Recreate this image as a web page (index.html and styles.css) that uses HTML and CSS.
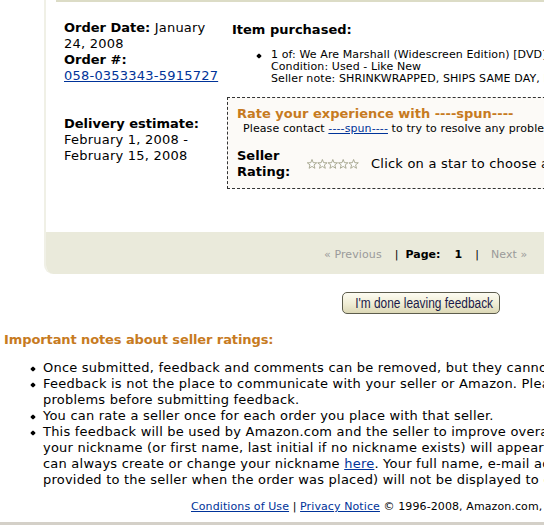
FILE: index.html
```html
<!DOCTYPE html>
<html lang="en">

<head>
    <meta charset="UTF-8">
    <meta name="viewport" content="width=device-width, initial-scale=1.0">
    <title>Leave Seller Feedback</title>
    <link rel="stylesheet" href="styles.css">
</head>

<body>
    <div class="page">

        <div class="panel">
            <div class="order">
                <div class="order-info">
                    <p><b>Order Date:</b> January 24, 2008</p>
                    <p><b>Order #:</b> <a class="order-link" href="#">058-0353343-5915727</a></p>
                    <p class="delivery"><b>Delivery estimate:</b> February 1, 2008 - February 15, 2008</p>
                </div>

                <div class="item-col">
                    <h3 class="item-title">Item purchased:</h3>
                    <ul class="items">
                        <li>1 of: We Are Marshall (Widescreen Edition) [DVD]<br>
                            Condition: Used - Like New<br>
                            Seller note: SHRINKWRAPPED, SHIPS SAME DAY, FAST DELIVERY!</li>
                    </ul>

                    <div class="rate-box">
                        <h3 class="rate-title">Rate your experience with ----spun----</h3>
                        <p class="contact">Please contact <a href="#">----spun----</a> to try to resolve any problems before leaving feedback.</p>
                        <div class="rating-row">
                            <div class="rating-label">Seller<br>Rating:</div>
                            <svg class="stars" viewBox="0 0 52 11">
                                <defs>
                                    <polygon id="star" points="5,0.5 6.2,3.7 9.7,3.8 7,5.9 7.9,9.3 5,7.4 2.1,9.3 3,5.9 0.3,3.8 3.8,3.7" />
                                </defs>
                                <use href="#star" x="0" />
                                <use href="#star" x="10.4" />
                                <use href="#star" x="20.8" />
                                <use href="#star" x="31.2" />
                                <use href="#star" x="41.6" />
                            </svg>
                            <span class="rating-hint">Click on a star to choose a rating</span>
                        </div>
                    </div>
                </div>
            </div>

            <div class="pager">
                <span class="off">&laquo; Previous</span>
                <span class="sep">|</span>
                <b class="page-label">Page:</b>
                <b class="page-num">1</b>
                <span class="sep sep-right">|</span>
                <span class="off next">Next &raquo;</span>
            </div>
        </div>

        <div class="done-row">
            <button class="done-btn"><span>I'm done leaving feedback</span></button>
        </div>

        <h3 class="notes-title">Important notes about seller ratings:</h3>
        <ul class="notes">
            <li>Once submitted, feedback and comments can be removed, but they cannot be edited.</li>
            <li>Feedback is not the place to communicate with your seller or Amazon. Please contact the seller to resolve any<br>
                problems before submitting feedback.</li>
            <li>You can rate a seller once for each order you place with that seller.</li>
            <li>This feedback will be used by Amazon.com and the seller to improve overall service. Your feedback will be public and<br>
                your nickname (or first name, last initial if no nickname exists) will appear alongside your comments. You<br>
                can always create or change your nickname <a href="#">here</a>. Your full name, e-mail address, and other information (as<br>
                provided to the seller when the order was placed) will not be displayed to other customers.</li>
        </ul>

        <p class="footer"><a href="#">Conditions of Use</a> | <a href="#">Privacy Notice</a> &copy; 1996-2008, Amazon.com, Inc. or its affiliates</p>

        <div class="bottom-bar"></div>
    </div>
</body>

</html>
```

FILE: styles.css
```css
* {
    margin: 0;
    padding: 0;
}

html {
    background: #fff;
}

body {
    font-family: "DejaVu Sans", Verdana, sans-serif;
    font-size: 13px;
    line-height: 16px;
    letter-spacing: 0.22px;
    color: #000;
    overflow: hidden;
}

a {
    color: #003399;
}

b,
h3 {
    font-size: 13px;
    letter-spacing: 0;
}

.page {
    width: 1000px;
}

.panel {
    margin-left: 44px;
    border-left: 2px solid #f0f0e6;
    border-bottom-left-radius: 9px;
    overflow: hidden;
}

.order {
    margin-left: 10px;
    border-top: 2px solid #dcdcc6;
    display: flex;
    padding: 18px 0 43px 8px;
}

.order-info {
    width: 163px;
    flex-shrink: 0;
}

.order-link {
    white-space: nowrap;
}

.delivery {
    margin-top: 32px;
}

.item-col {
    width: 720px;
}

.item-title {
    padding: 2px 0 0 5px;
}

.items {
    list-style: none;
    margin-top: 11px;
    padding-left: 44px;
    font-size: 11px;
    line-height: 12px;
    letter-spacing: 0.1px;
    white-space: nowrap;
}

.items li,
.notes li {
    position: relative;
}

.items li::before,
.notes li::before {
    content: "";
    position: absolute;
    left: -14px;
    top: 5px;
    width: 4px;
    height: 4px;
    background: #000;
    border-radius: 1px;
    transform: rotate(45deg);
}

.rate-box {
    margin-top: 12px;
    border: 1px dashed #333;
    background: #fcfaf7;
    padding: 8px 0 8px 9px;
}

.rate-title,
.notes-title {
    color: #c77b1f;
}

.contact {
    margin-top: 1px;
    font-size: 11px;
    line-height: 12px;
    letter-spacing: 0.1px;
    padding-left: 6px;
    white-space: nowrap;
}

.rating-row {
    display: flex;
    align-items: center;
    margin-top: 13px;
}

.rating-label {
    font-weight: bold;
    letter-spacing: 0;
    width: 70px;
}

.stars {
    display: block;
    width: 52px;
    height: 11px;
    fill: #fff;
    stroke: #a3a38a;
    stroke-width: 0.9;
}

.rating-hint {
    margin-left: 12px;
    white-space: nowrap;
}

.pager {
    background: #eaeadb;
    height: 42px;
    box-sizing: border-box;
    padding: 3px 0 0 278px;
    display: flex;
    align-items: center;
    font-size: 11px;
    letter-spacing: 0.1px;
}

.pager b {
    font-size: 11px;
}

.pager .off {
    color: #9a9a9a;
}

.pager .sep {
    margin-left: 13px;
}

.pager .page-label {
    margin-left: 7px;
}

.pager .page-num {
    margin-left: 14px;
}

.pager .sep-right {
    margin-left: 13px;
}

.pager .next {
    margin-left: 12px;
}

.done-row {
    padding: 18px 0 0 342px;
}

.done-btn {
    display: block;
    width: 158px;
    height: 22px;
    border: 1px solid #5c5c4c;
    border-radius: 5px;
    background: linear-gradient(#fdfcf2, #efecd4 55%, #dcd8b6);
    font-family: "Liberation Sans", sans-serif;
    font-size: 14px;
    letter-spacing: 0;
    color: #1a1a48;
    white-space: nowrap;
    cursor: pointer;
}

.done-btn span {
    display: inline-block;
    transform: scaleX(0.85);
}

.notes-title {
    margin: 18px 0 0 4px;
    letter-spacing: -0.1px;
}

.notes {
    list-style: none;
    margin-top: 12px;
    padding-left: 43px;
    white-space: nowrap;
}

.notes li::before {
    left: -12px;
    top: 7px;
}

.footer {
    margin-top: 12px;
    padding-left: 191px;
    font-size: 11px;
    line-height: 14px;
    letter-spacing: 0.1px;
    white-space: nowrap;
}

.bottom-bar {
    margin-top: 8px;
    height: 20px;
    background: #d4d0c8;
}
```
